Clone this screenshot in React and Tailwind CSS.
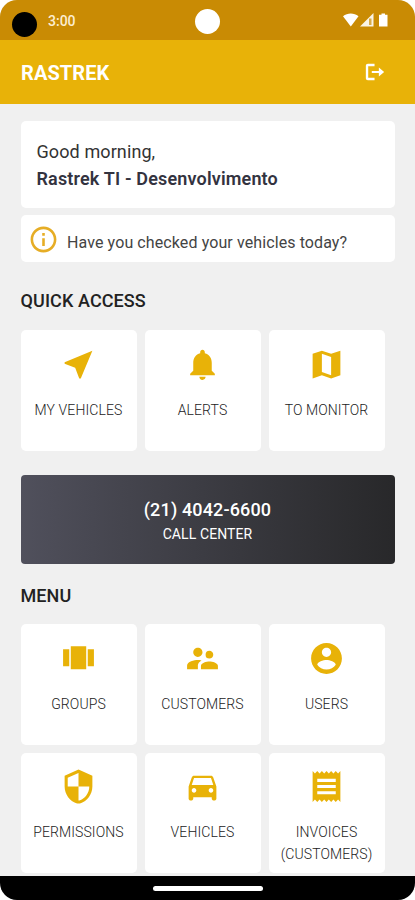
import React from 'react'
import {
  MdNearMe, MdNotifications, MdSupervisorAccount,
  MdDirectionsCar, MdReceipt, MdInfoOutline,
} from 'react-icons/md'

const makeIcon = (d) => ({ className }) => (
  <svg viewBox="0 0 24 24" fill="currentColor" className={className}>
    <path d={d} />
  </svg>
)

const CarouselIcon = makeIcon('M7 19h10V4H7v15zm-5-2h4V6H2v11zM18 6v11h4V6h-4z')
const AccountIcon = makeIcon('M12 2C6.48 2 2 6.48 2 12s4.48 10 10 10 10-4.48 10-10S17.52 2 12 2zm0 3c1.66 0 3 1.34 3 3s-1.34 3-3 3-3-1.34-3-3 1.34-3 3-3zm0 14.2c-2.5 0-4.71-1.28-6-3.22.03-1.99 4-3.08 6-3.08 1.99 0 5.97 1.09 6 3.08-1.29 1.94-3.5 3.22-6 3.22z')
const MapIcon = makeIcon('M21 3L15 5.1 9 3 3 5.03V21.05L9 18.9l6 2.1 6-2.03V3zM15 19l-6-2.11V5l6 2.11V19z')
const ShieldIcon = makeIcon('M12 1L3 5v7c0 5.2 3.6 9.6 7.6 10.8q1.4.4 2.8 0C17.4 21.6 21 17.2 21 12V5l-9-4zm0 11h7c0 4.2-2.9 7.9-6 8.9q-.5.2-1 .2V12H5V6.3l7-3.11V12z')
const LogoutIcon = makeIcon('M16.2 7v3.8H8.5v2.4h7.7V17L22 12zM4.6 5.6h6.9V3H4.2C3 3 2 4 2 5.2v13.6C2 20 3 21 4.2 21h7.3v-2.6H4.6z')

const QUICK_ACCESS = [
  { label: 'MY VEHICLES', icon: MdNearMe },
  { label: 'ALERTS', icon: MdNotifications },
  { label: 'TO MONITOR', icon: MapIcon },
]

const MENU = [
  { label: 'GROUPS', icon: CarouselIcon },
  { label: 'CUSTOMERS', icon: MdSupervisorAccount },
  { label: 'USERS', icon: AccountIcon },
  { label: 'PERMISSIONS', icon: ShieldIcon },
  { label: 'VEHICLES', icon: MdDirectionsCar },
  { label: 'INVOICES (CUSTOMERS)', icon: MdReceipt },
]

function StatusBar() {
  return (
    <div className="relative flex h-[39.5px] shrink-0 items-center bg-[#c98b04] px-3 text-white">
      <div className="mt-[9px] h-[25px] w-[25px] rounded-full bg-black" />
      <span className="ml-[11px] mt-[3px] text-[14px] font-medium text-[#fdeed2]">3:00</span>
      <div className="absolute left-[195px] top-[9px] h-[25px] w-[25px] rounded-full bg-white" />
      <svg className="ml-auto mr-[14px] h-4 w-[46px]" viewBox="0 0 46 16" fill="currentColor">
        <path d="M0 4.2C4.5.6 11 .6 15.500 4.200L7.800 14.500z" />
        <path d="M30.500 1v13.500H17z" opacity=".9" />
        <path d="M26 6.500h2.500v6.500H26z" fill="#c98b04" opacity=".7" />
        <path d="M38.500 1.500H42v1.200h2.500v11.800H36V2.700h2.500z" />
      </svg>
    </div>
  )
}

function Tile({ label, icon: Icon }) {
  return (
    <button className="flex h-[120.5px] flex-col items-center rounded-[5px] bg-white pt-[15.5px]">
      <Icon className="h-[37px] w-[37px] text-[#e8b208]" />
      <span className="mt-[17px] w-[106px] text-[14px] font-light leading-[21.5px] tracking-[0.1px] text-[#222]">{label}</span>
    </button>
  )
}

function TileGrid({ items }) {
  return (
    <div className="grid grid-cols-[116px_116px_116px] gap-2">
      {items.map(item => <Tile key={item.label} {...item} />)}
    </div>
  )
}

export default function App() {
  return (
    <div className="h-[900px] w-[415px] bg-white font-['Roboto',sans-serif]">
      <div className="flex h-full flex-col overflow-hidden rounded-[17px] bg-[#f0f0f0]">
        <StatusBar />
        <header className="flex h-[64.5px] shrink-0 items-center justify-between bg-[#e8b208] pl-[21px] pr-[29px] pt-[2px] text-white">
          <h1 className="text-[20px] font-bold tracking-[0.1px]">RASTREK</h1>
          <LogoutIcon className="mb-[2px] h-[22px] w-[22px]" />
        </header>

        <main className="min-h-0 flex-1 overflow-hidden px-[20.5px] pt-[16.5px]">
          <section className="h-[87px] rounded-[5px] bg-white px-4 pt-[17px] text-[18px] leading-[27px] text-[#333]">
            <p className="tracking-[0.1px]">Good morning,</p>
            <p className="font-semibold tracking-[0.16px] text-[#33333f]">Rastrek TI - Desenvolvimento</p>
          </section>
          <section className="mt-[7.5px] flex h-[47px] items-center rounded-[5px] bg-white pl-[7.5px]">
            <MdInfoOutline className="mt-px h-[31px] w-[31px] text-[#e6ad25]" />
            <p className="ml-2 pt-[9px] text-[16px] tracking-[0.1px] text-[#444]">Have you checked your vehicles today?</p>
          </section>

          <h2 className="mb-[16px] mt-[25px] text-[18px] font-medium leading-[27px] tracking-[0.1px] text-[#222]">QUICK ACCESS</h2>
          <TileGrid items={QUICK_ACCESS} />

          <section className="mt-6 flex h-[89px] flex-col items-center justify-center rounded-[4px] bg-linear-to-r from-[#50505c] to-[#28282a] pt-[3px] text-white">
            <p className="text-[18px] font-medium leading-[26px] tracking-[0.15px]">(21) 4042-6600</p>
            <p className="text-[14px] leading-[22px] tracking-[0.1px]">CALL CENTER</p>
          </section>

          <h2 className="mb-[15.5px] mt-[18px] text-[18px] font-medium leading-[27px] tracking-[0.1px] text-[#222]">MENU</h2>
          <TileGrid items={MENU} />
        </main>

        <footer className="flex h-6 shrink-0 items-center justify-center bg-black">
          <div className="h-[5px] w-[110px] rounded-full bg-white" />
        </footer>
      </div>
    </div>
  )
}
